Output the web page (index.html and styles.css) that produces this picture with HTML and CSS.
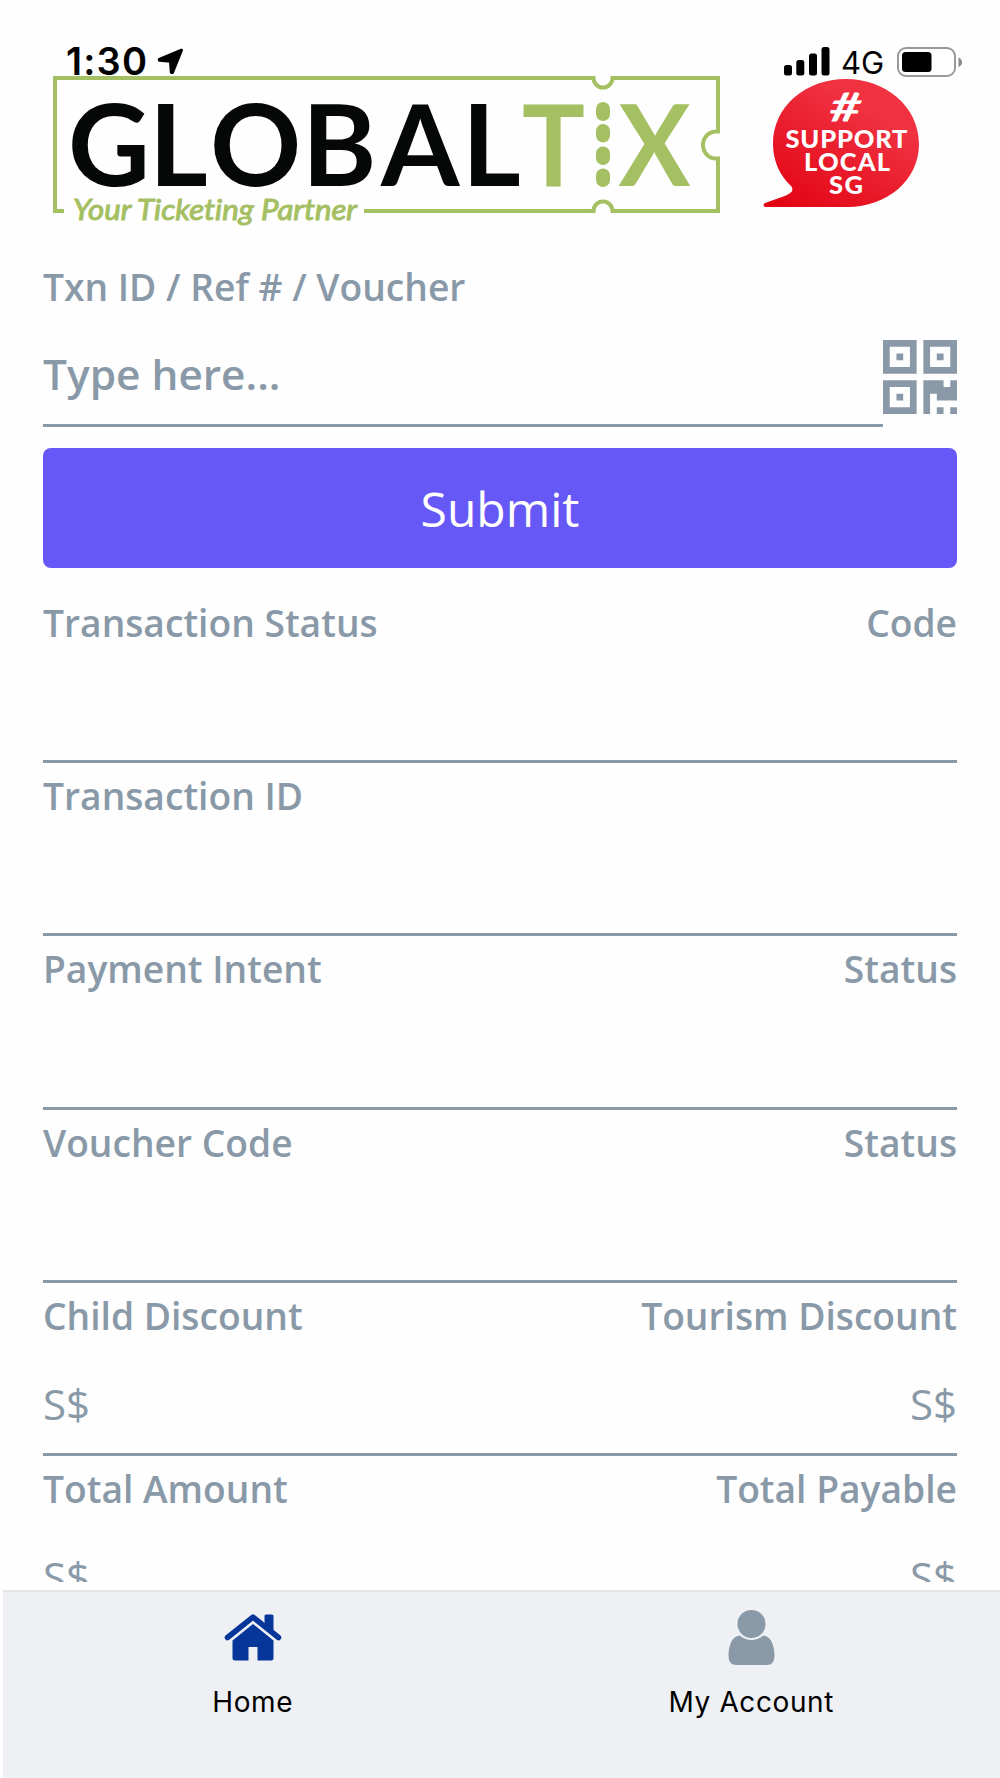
FILE: index.html
```html
<!DOCTYPE html>
<html lang="en">
<head>
<meta charset="utf-8">
<title>GlobalTix</title>
<link rel="stylesheet" href="styles.css">
</head>
<body>
<div class="app">
  <div class="status-bar">
    <div class="status-left">
      <span class="clock">1:30</span>
      <svg class="location" width="27" height="27" viewBox="0 0 27 27"><path d="M24.500 2.200 2.300 11.300 2.300 12.300 13.500 13.300 14.300 24.500 15.500 24.500Z" stroke="#000" stroke-width="3" stroke-linejoin="round"/></svg>
    </div>
    <div class="status-right">
      <svg width="46" height="29" viewBox="0 0 46 29"><rect y="18" width="8" height="10.500" rx="2.500"/><rect x="12.300" y="13" width="8" height="15.500" rx="2.500"/><rect x="25" y="6.500" width="8" height="22" rx="2.500"/><rect x="37.500" y="0" width="8" height="28.500" rx="2.500"/></svg>
      <span class="network">4G</span>
      <svg width="66" height="31" viewBox="0 0 66 31"><rect x="1" y="1" width="57" height="28" rx="8" fill="#fff" stroke="#999" stroke-width="2"/><rect x="5" y="5" width="29.500" height="20" rx="3.500"/><path d="M61.500 10.500Q65 12 65 15.300T61.500 20Z" fill="#888"/></svg>
    </div>
  </div>

  <header class="brand">
    <svg class="logo" width="670" height="156" viewBox="0 0 670 156">
      <path class="ticket" d="M12 136H3V3H541.500a9.500 9.500 0 0 0 19 0H666V56.500H664a13 13.500 0 0 0 0 27H666V136H560.500a9.500 9.500 0 0 0-19 0H312"/>
      <text class="word" y="111" x="16 97 158 250 329 410">GLOBAL</text>
      <text class="word tix" y="111" x="470" textLength="63" lengthAdjust="spacingAndGlyphs">T</text>
      <g class="dots"><rect x="544" y="27" width="14" height="19" rx="7"/><rect x="544" y="49" width="14" height="18.500" rx="7"/><rect x="544" y="71.500" width="14" height="18.500" rx="7"/><rect x="544" y="93.500" width="14" height="18.500" rx="7"/></g>
      <text class="word tix" y="111" x="566.500" textLength="72" lengthAdjust="spacingAndGlyphs">X</text>
      <text class="tagline" x="21" y="145" textLength="284" lengthAdjust="spacingAndGlyphs">Your Ticketing Partner</text>
    </svg>
    <svg class="badge" width="157" height="131" viewBox="0 0 157 131">
      <defs><linearGradient id="red" x1="0" y1="1" x2=".6" y2=".2"><stop offset="0" stop-color="#e20010"/><stop offset="1" stop-color="#ef3140"/></linearGradient></defs>
      <path fill="url(#red)" d="M83 1C122 1 156 28 156 66C156 103 123 129 85 129H2Q-1 127 2 125L23 117.500Q33 113 28 108C17 98 10 83 10 66C10 28 43 1 83 1Z"/>
      <text class="hash" x="67" y="43" textLength="31" lengthAdjust="spacingAndGlyphs">#</text>
      <text class="slogan" x="22.500" y="69.500" textLength="122">SUPPORT</text>
      <text class="slogan" x="41" y="93" textLength="86">LOCAL</text>
      <text class="slogan" x="66" y="116" textLength="34">SG</text>
    </svg>
  </header>

  <main class="form">
    <section class="field search">
      <div class="labels"><span>Txn ID / Ref # / Voucher</span></div>
      <div class="entry">
        <div class="input">Type here...</div>
        <svg class="qr" width="74" height="74" viewBox="0 0 11 11"><path fill-rule="evenodd" d="M0 0h5v5H0zM1 1v3h3V1zM2 2h1v1H2zM6 0h5v5H6zM7 1v3h3V1zM8 2h1v1H8zM0 6h5v5H0zM1 7v3h3V7zM2 8h1v1H2zM6 6h3v1h1V6h1v3H8V8H7v3H6zM8 10h1v1H8zM10 10h1v1h-1z"/></svg>
      </div>
    </section>
    <button class="submit" type="button">Submit</button>
    <section class="field"><div class="labels"><span>Transaction Status</span><span>Code</span></div><div class="values"></div></section>
    <section class="field"><div class="labels"><span>Transaction ID</span></div><div class="values"></div></section>
    <section class="field"><div class="labels"><span>Payment Intent</span><span>Status</span></div><div class="values"></div></section>
    <section class="field"><div class="labels"><span>Voucher Code</span><span>Status</span></div><div class="values"></div></section>
    <section class="field"><div class="labels"><span>Child Discount</span><span>Tourism Discount</span></div><div class="values"><span>S$</span><span>S$</span></div></section>
    <section class="field"><div class="labels"><span>Total Amount</span><span>Total Payable</span></div><div class="values"><span>S$</span><span>S$</span></div></section>
  </main>

  <nav class="tabs">
    <div class="tab">
      <svg width="58" height="56" viewBox="0 0 58 56"><g fill="#07369b"><path d="M3.500 27.500 29 7.200 54.500 27.500" fill="none" stroke="#07369b" stroke-width="5.500" stroke-linejoin="round" stroke-linecap="round"/><path d="M40.500 6q0-1.500 1.500-1.500h6q1.500 0 1.500 1.500v17l-9-7zM29 14 49.500 30.500V48q0 2.500-2.500 2.500H33.500V37h-9v13.500H11q-2.500 0-2.500-2.500V30.500Z"/></g></svg>
      <span>Home</span>
    </div>
    <div class="tab">
      <svg width="58" height="56" viewBox="0 0 58 56"><g fill="#8999a8"><circle cx="29.500" cy="14" r="14"/><path d="M17.500 25.500Q29.500 34.500 41.500 25.500C49.500 26 52.500 37 52.500 46Q52.500 55 44.500 55H14.500Q6.500 55 6.500 46C6.500 37 9.500 26 17.500 25.500Z"/></g></svg>
      <span>My Account</span>
    </div>
  </nav>
</div>
</body>
</html>
```
FILE: styles.css
```css
* { box-sizing: border-box; }
body { margin: 0; background: #fefefe; }
svg { display: block; flex: none; overflow: visible; }

.app { display: flex; flex-direction: column; width: 1000px; height: 1778px; overflow: hidden; }

.status-bar { display: flex; justify-content: space-between; height: 75px; padding: 44px 37px 0 66px; }
.status-left, .status-right { display: flex; align-items: flex-start; }
.clock { width: 91px; font: 600 38px/34px Inter, sans-serif; letter-spacing: 1.2px; white-space: nowrap; }
.location { margin-top: 4px; }
.status-right { margin-top: 3px; }
.network { width: 67px; padding-left: 11px; font: 400 31px/32px Inter, sans-serif; }

.brand { display: flex; height: 180px; padding-left: 52px; }
.badge { margin: 3px 0 0 41px; }
.ticket { fill: none; stroke: #a5c063; stroke-width: 4px; }
.word { font: 700 113px Lato, sans-serif; fill: #060807; }
.word.tix, .dots { fill: #a5c063; }
.tagline { font: italic 400 29px Lato, sans-serif; font-variant-ligatures: none; fill: #a5c063; stroke: #a5c063; stroke-width: 1px; }
.hash { font: italic 400 38px Lato, sans-serif; fill: #fff; stroke: #fff; stroke-width: 1.2px; }
.slogan { font: 900 25.5px Lato, sans-serif; fill: #fff; }

.form { flex: none; height: 1327px; padding: 0 43px; overflow: hidden; color: #8999a8; font-family: "Open Sans", sans-serif; }
.field { height: 173.200px; padding-top: 8px; border-bottom: 3px solid #8999a8; }
.labels { display: flex; justify-content: space-between; height: 80px; font-size: 37.200px; font-weight: 600; line-height: 50px; }
.values { display: flex; justify-content: space-between; font-size: 42px; line-height: 66px; }
.search { height: 172px; padding-top: 7px; border: 0; }
.search .labels { height: 69px; }
.entry { display: flex; align-items: flex-start; }
.input { flex: 1; height: 96px; border-bottom: 3px solid #8999a8; font-size: 42.400px; font-weight: 600; line-height: 86px; }
.qr { margin-top: 9px; fill: #8999a8; }
.submit { display: block; width: 100%; height: 120px; margin: 21px 0 22px; border: 0; border-radius: 8px; background: #6658f6; color: #fff; font: 400 48px "Open Sans", sans-serif; }

.tabs { flex: none; display: flex; height: 188px; margin: 8px 0 0 3px; border-top: 2px solid #e4e5e9; background: #eff0f3; }
.tab { flex: 1; display: flex; flex-direction: column; align-items: center; padding: 18px 0 0 1px; font: 400 28px/36px Inter, sans-serif; letter-spacing: .6px; color: #000; }
.tab span { margin-top: 18px; }
```
